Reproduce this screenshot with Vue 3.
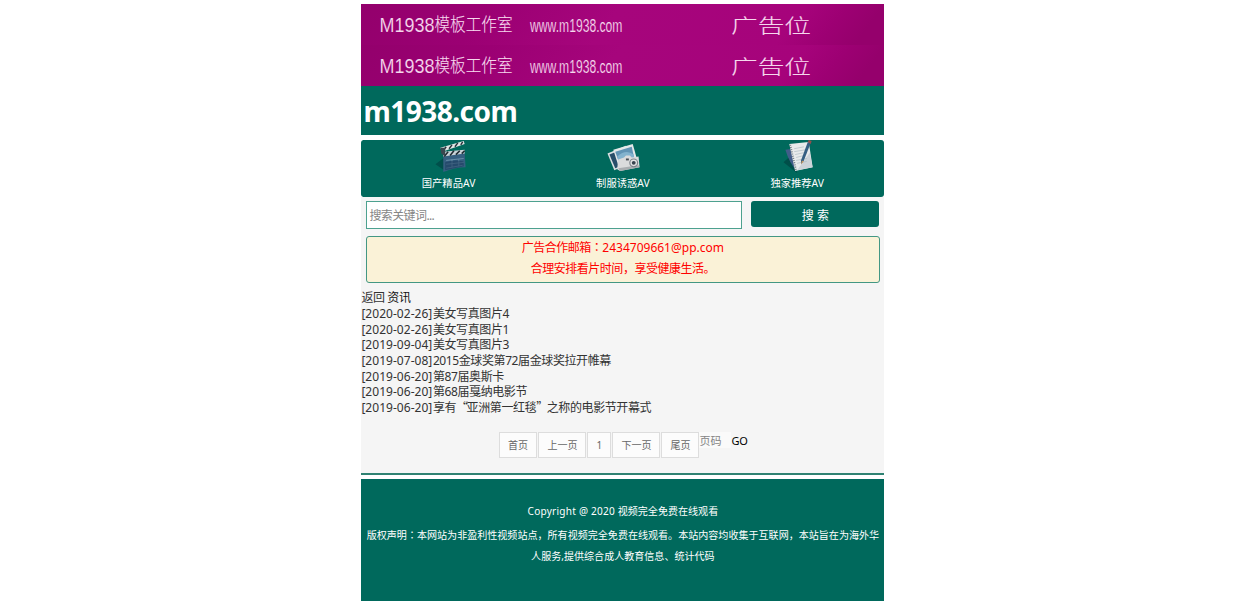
<template>
  <div class="page">
    <div class="banners">
      <svg v-for="n in 2" :key="n" class="banner" viewBox="0 0 523 41" preserveAspectRatio="none">
        <defs>
          <linearGradient :id="'bg' + n" x1="0" x2="1" y1="0" y2="0.06">
            <stop offset="0" stop-color="#93006c" />
            <stop offset="0.25" stop-color="#9b0073" />
            <stop offset="0.5" stop-color="#a6057c" />
            <stop offset="0.85" stop-color="#a6037b" />
            <stop offset="0.93" stop-color="#9d0073" />
            <stop offset="1" stop-color="#95006c" />
          </linearGradient>
        </defs>
        <rect width="523" height="41" :fill="'url(#bg' + n + ')'" />
        <g class="banner-text">
          <text x="18.500" y="27.5" font-size="19.500" textLength="55" lengthAdjust="spacingAndGlyphs" class="thin">M1938</text>
          <text x="73.500" y="27" font-size="18" textLength="78" lengthAdjust="spacingAndGlyphs" class="cjk">模板工作室</text>
          <text x="169" y="28" font-size="18" textLength="92.500" lengthAdjust="spacingAndGlyphs" class="thin">www.m1938.com</text>
          <text x="370" y="29" font-size="19" textLength="80" lengthAdjust="spacingAndGlyphs" class="cjk">广告位</text>
        </g>
      </svg>
    </div>
    <header class="header">
      <a class="logo">m1938.com</a>
    </header>

    <nav class="nav">
      <a v-for="item in navs" :key="item.name" class="nav-item">
        <svg v-if="item.icon === 'film'" class="nav-icon" viewBox="0 0 36 36">
          <path d="M1 25L10 18V31Z" fill="#004f4b" />
          <path d="M9 14L31 13L32 28Q21 28 9 33Z" fill="#355f80" />
          <path d="M9 12L31 10V14L9 17Z" fill="#c9d3d8" />
          <path d="M10 17L14 12M16 16L20 11M22 15L26 11M28 14L31 11" stroke="#202b32" stroke-width="1.6" />
          <path d="M6 8L30 1L31 4L8 12Z" fill="#e2e5e5" />
          <path d="M9 11L12 7M15 9L18 5M21 7L24 3M27 5L29 2" stroke="#27333a" stroke-width="1.5" />
          <path d="M6 8L11 8L11 17L7 14Z" fill="#394750" />
          <path d="M12 21L30 19M12 25L30 23M12 29L29 26M18 20V28M25 20V27" stroke="#779bb2" stroke-width=".8" />
          <path d="M11 23Q20 20 30 22V27L11 31Z" fill="#17395b" opacity=".55" />
        </svg>
        <svg v-else-if="item.icon === 'photo'" class="nav-icon photo" viewBox="0 0 36 36">
          <path d="M1 14L20 6L29 22L8 31Z" fill="#d9e0e1" />
          <path d="M3 15L18 9L24 23L9 29Z" fill="#284e69" />
          <path d="M7 10L27 4L32 22L13 29Z" fill="#e4e9e9" />
          <path d="M9 12L26 7L29 21L14 26Z" fill="#6194b5" />
          <path d="M11 17Q20 9 28 15L29 21L14 26Z" fill="#83b3ce" />
          <path d="M12 20L18 18L20 16H24L26 18L33 17L34 28L14 32L11 30Z" fill="#dadbdc" />
          <path d="M12 29L33 26L34 28L14 32Z" fill="#a9adb0" />
          <circle cx="28" cy="23.5" r="4.6" fill="#7b8288" />
          <circle cx="28" cy="23.5" r="3.4" fill="#e3e4e4" />
          <circle cx="28" cy="23.5" r="2" fill="#39434e" />
          <rect x="20" y="19" width="3" height="2" fill="#4c5259" />
        </svg>
        <svg v-else class="nav-icon" viewBox="0 0 36 36">
          <path d="M1 23L11 14L15 34Z" fill="#004f49" />
          <path d="M3 10L11 9L15 32Q7 24 3 10Z" fill="#415d89" />
          <path d="M7 4L27 2L31 28L13 32Z" fill="#e8eaeb" />
          <path d="M28 13L31 28L15 31Z" fill="#ccd3d9" />
          <path d="M8 5L14 31" stroke="#6a777e" stroke-width="1.7" stroke-dasharray="1 1.3" />
          <path d="M12 9L22 7M12 12L24 10M13 15L22 13M14 18L22 16M14 21L25 19M15 24L25 22" stroke="#aebcc2" stroke-width=".7" />
          <path d="M26 2L29 3L22 21L19 25V21Z" fill="#355f83" />
          <path d="M26 2L27 0L30 1L29 4Z" fill="#934d4b" />
          <path d="M19 25L20 21L22 22Z" fill="#ca9b62" />
        </svg>
        <span>{{ item.name }}</span>
      </a>
    </nav>

    <main class="main">
      <form class="search" @submit.prevent>
        <input v-model="keyword" class="search-input" type="text" placeholder="搜索关键词..." />
        <button class="search-btn">搜 索</button>
      </form>
      <div class="notice">
        <p>广告合作邮箱<span class="colon">：</span><span class="mail">2434709661@pp.com</span></p>
        <p>合理安排看片时间<span class="comma">，</span>享受健康生活。</p>
      </div>
      <div class="crumb"><a>返回</a> <b>资讯</b></div>
      <ul class="list">
        <li v-for="(item, i) in news" :key="i">
          <span class="date">[{{ item.date }}]</span><a><span v-for="(part, j) in split(item.title)" :key="j" :class="part.type">{{ part.text }}</span></a>
        </li>
      </ul>
      <div class="pager">
        <a v-for="p in pages" :key="p.text" class="page-link" :style="{ width: p.width + 'px' }">{{ p.text }}</a>
        <input v-model="pageNo" class="page-input" type="text" placeholder="页码" />
        <button class="go">GO</button>
      </div>
    </main>

    <footer class="footer">
      <p class="copyright"><span>Copyright @ 2020</span> 视频完全免费在线观看</p>
      <p>版权声明<span class="colon">：</span>本网站为非盈利性视频站点，所有视频完全免费在线观看。本站内容均收集于互联网，本站旨在为海外华<br />人服务,提供综合成人教育信息、统计代码</p>
    </footer>
  </div>
</template>

<script setup>
import { ref } from 'vue'

const keyword = ref('')
const pageNo = ref('')

const navs = [
  { name: '国产精品AV', icon: 'film' },
  { name: '制服诱惑AV', icon: 'photo' },
  { name: '独家推荐AV', icon: 'note' },
]

const news = [
  { date: '2020-02-26', title: '美女写真图片4' },
  { date: '2020-02-26', title: '美女写真图片1' },
  { date: '2019-09-04', title: '美女写真图片3' },
  { date: '2019-07-08', title: '2015金球奖第72届金球奖拉开帷幕' },
  { date: '2019-06-20', title: '第87届奥斯卡' },
  { date: '2019-06-20', title: '第68届戛纳电影节' },
  { date: '2019-06-20', title: '享有“亚洲第一红毯”之称的电影节开幕式' },
]

const pages = [
  { text: '首页', width: 38 },
  { text: '上一页', width: 48 },
  { text: '1', width: 24 },
  { text: '下一页', width: 48 },
  { text: '尾页', width: 38 },
]

function split(title) {
  return title.match(/\d+|[“”]|[^\d“”]+/g).map((text) => {
    if (/\d/.test(text)) return { text, type: 'num' }
    return { text, type: /[“”]/.test(text) ? 'quote' : 'han' }
  })
}
</script>

<style>
body {
  margin: 0;
  background: #fff;
}
</style>

<style scoped>
.page {
  width: 523px;
  height: 605px;
  margin: 0 0 0 361.4px;
  padding-top: 4px;
  box-sizing: border-box;
  overflow: hidden;
  font-family: 'Noto Sans', 'Noto Sans CJK SC', sans-serif;
  font-size: 12px;
  color: #333;
}

p,
ul {
  margin: 0;
  padding: 0;
  list-style: none;
}

.banners {
  height: 82px;
}

.banner {
  display: block;
  width: 523px;
  height: 41px;
}

.banner-text {
  fill: #f6d8ed;
  font-family: 'Liberation Sans', sans-serif;
  font-weight: 300;
}

.banner-text .thin {
  stroke: #a0037a;
  stroke-width: 0.15;
}

.banner-text .cjk {
  font-family: 'Noto Sans CJK SC', sans-serif;
  stroke: #f6d8ed;
  stroke-width: 0.1;
}

.header {
  height: 49px;
  background: #00695c;
}

.logo {
  display: block;
  padding-left: 2px;
  font-size: 28px;
  font-weight: 700;
  line-height: 51px;
  letter-spacing: -0.5px;
  color: #fff;
}

.nav {
  display: flex;
  height: 57px;
  margin-top: 5px;
  border-radius: 3px;
  background: #00695c;
}

.nav-item {
  display: flex;
  flex: 1;
  flex-direction: column;
  align-items: center;
  font-size: 10.3px;
  line-height: 17px;
  color: #fff;
}

.nav-icon {
  width: 36px;
  height: 35px;
  margin-left: 6px;
}

.nav-icon.photo {
  margin-left: 2px;
}

.main {
  height: 278px;
  padding-top: 4px;
  box-sizing: border-box;
  background: #f5f5f5;
  border-bottom: 2px solid #2f8272;
}

.search {
  display: flex;
  justify-content: space-between;
  padding: 0 5.5px 0 5px;
}

.search-input {
  width: 376px;
  height: 28px;
  padding: 0 2px;
  box-sizing: border-box;
  border: 1px solid #4da18f;
  font-family: inherit;
  font-size: 12px;
  letter-spacing: -0.6px;
  background: #fff;
  outline: none;
}

.search-input::placeholder {
  color: #858585;
}

.search-btn {
  width: 128px;
  height: 26px;
  padding: 2px 0 0 1px;
  border: 0;
  border-radius: 3px;
  font-family: inherit;
  font-size: 12px;
  color: #fff;
  background: #00695c;
}

.notice {
  height: 47px;
  margin: 7px 4.5px 0;
  padding-top: 1px;
  box-sizing: border-box;
  border: 1px solid #439783;
  border-radius: 3px;
  line-height: 20.5px;
  letter-spacing: -0.5px;
  text-align: center;
  color: #f00;
  background: #faf2d7;
}

.mail {
  letter-spacing: 0;
}

.colon {
  font-family: 'Noto Sans CJK JP', sans-serif;
  line-height: 1;
}

.comma {
  line-height: 1;
}

.crumb {
  height: 16px;
  margin-top: 7px;
  line-height: 16px;
  letter-spacing: -0.4px;
}

.crumb b {
  font-weight: 400;
  color: #111;
}

.list {
  line-height: 15.7px;
}

.list li {
  display: flex;
  height: 15.7px;
}

.date {
  width: 71.5px;
  letter-spacing: 0.03px;
  white-space: nowrap;
}

.han,
.num {
  letter-spacing: -0.4px;
}

.quote {
  font-family: 'Noto Sans CJK SC', sans-serif;
  line-height: 1;
  letter-spacing: -1.5px;
}

.pager {
  display: flex;
  height: 26px;
  margin: 16.2px 0 0 137.6px;
}

.page-link {
  height: 26px;
  margin-right: 1px;
  box-sizing: border-box;
  border: 1px solid #ddd;
  font-size: 10px;
  line-height: 25px;
  text-align: center;
  color: #666;
  background: #fcfcfc;
  flex: none;
}

.page-link:nth-child(1) {
  margin-right: 1.5px;
}

.page-link:nth-child(5) {
  margin-right: 0;
}

.page-input {
  width: 32px;
  height: 16px;
  padding: 0;
  border: 0;
  font-family: inherit;
  font-size: 11px;
  background: #fafafa;
}

.page-input::placeholder {
  color: #858585;
}

.go {
  height: 17px;
  padding: 0;
  border: 0;
  font-family: inherit;
  font-size: 11px;
  line-height: 17px;
  letter-spacing: -0.3px;
  background: none;
}

.footer {
  height: 122px;
  margin-top: 4px;
  padding-top: 22px;
  box-sizing: border-box;
  font-size: 10.05px;
  line-height: 21px;
  text-align: center;
  white-space: nowrap;
  color: #fff;
  background: #00695c;
}

.copyright {
  height: 24px;
}

.copyright span {
  letter-spacing: 0.25px;
}
</style>
